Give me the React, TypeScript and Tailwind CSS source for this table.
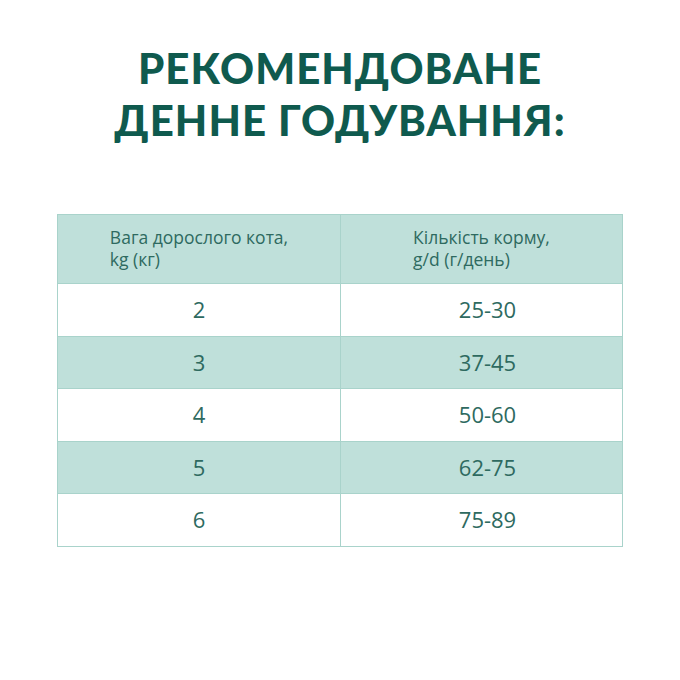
const rows = [
  ["2", "25-30"],
  ["3", "37-45"],
  ["4", "50-60"],
  ["5", "62-75"],
  ["6", "75-89"],
];

export default function App() {
  return (
    <div className="w-[680px] h-[680px] bg-white flex flex-col items-center pt-[42px]">
      <h1 className="text-center text-[#0f5a4e] font-[Lato,sans-serif] font-black text-[42px] leading-[52px] tracking-[0.025em] uppercase">
        Рекомендоване
        <br />
        денне годування:
      </h1>

      <table className="mt-[68px] w-[566px] border-collapse border border-[#a9d3cb] font-['Open_Sans',sans-serif] text-[#2e6a60]">
        <thead>
          <tr className="h-[69px] bg-[#bfe0da]">
            <th className="w-[283px] border border-[#a9d3cb] font-normal text-center">
              <div className="inline-block text-left text-[17.5px] leading-[22px]">
                Вага дорослого кота,
                <br />
                kg (кг)
              </div>
            </th>
            <th className="border border-[#a9d3cb] font-normal text-center">
              <div className="inline-block text-left text-[17.5px] leading-[22px]">
                Кількість корму,
                <br />
                g/d (г/день)
              </div>
            </th>
          </tr>
        </thead>
        <tbody>
          {rows.map(([w, g], i) => (
            <tr key={w} className={i % 2 === 1 ? "h-[52.5px] bg-[#bfe0da]" : "h-[52.5px] bg-white"}>
              <td className="border border-[#a9d3cb] text-center text-[22px]">{w}</td>
              <td className="border border-[#a9d3cb] text-center text-[22px] pl-[12px]">{g}</td>
            </tr>
          ))}
        </tbody>
      </table>
    </div>
  );
}
